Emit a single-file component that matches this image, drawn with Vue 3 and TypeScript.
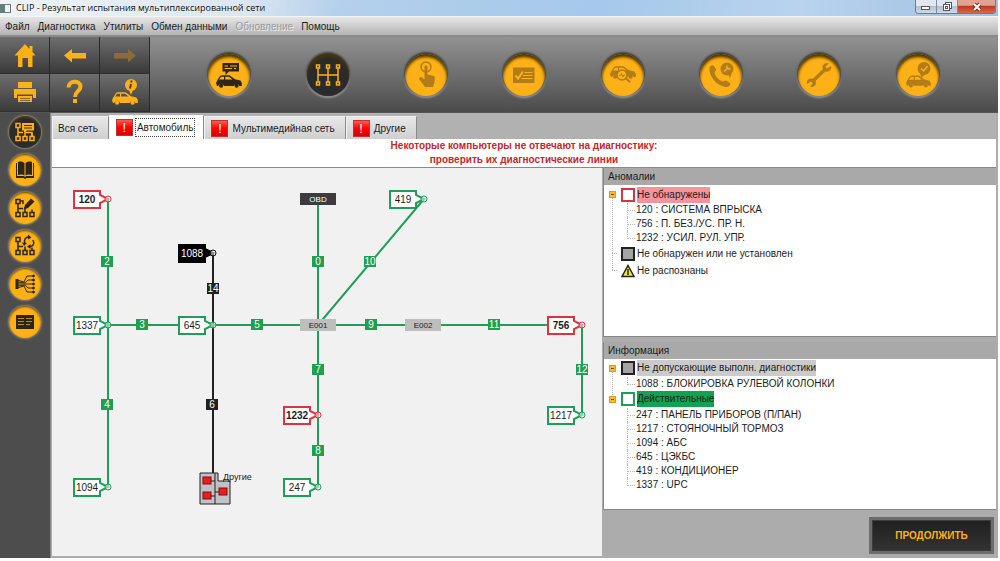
<script setup lang="ts">
import { ref } from 'vue'

type Tone = 'ok' | 'bad' | 'off'

interface Ecu { id: string; x: number; y: number; tone: Tone }
interface Tag { id: string; x: number; y: number; dark?: boolean }
interface Joint { id: string; x: number; y: number; dark?: boolean }
interface Group { label: string; mark: string; tint: string; open: boolean; items: string[] }

const menus = [
  { label: 'Файл' },
  { label: 'Диагностика' },
  { label: 'Утилиты' },
  { label: 'Обмен данными' },
  { label: 'Обновление', disabled: true },
  { label: 'Помощь' },
]

const navButtons = [
  { id: 'home', label: 'Главная' },
  { id: 'back', label: 'Назад' },
  { id: 'forward', label: 'Вперёд' },
  { id: 'print', label: 'Печать' },
  { id: 'help', label: 'Справка' },
  { id: 'carinfo', label: 'Данные автомобиля' },
]

const modes = [
  { id: 'vehicle', label: 'Автомобиль', state: 'ready' },
  { id: 'network', label: 'Сеть', state: 'current' },
  { id: 'touch', label: 'Выбор', state: 'idle' },
  { id: 'check', label: 'Проверки', state: 'idle' },
  { id: 'search', label: 'Поиск', state: 'idle' },
  { id: 'phone', label: 'Поддержка', state: 'idle' },
  { id: 'repair', label: 'Ремонт', state: 'idle' },
  { id: 'done', label: 'Завершение', state: 'idle' },
]

const tools = [
  { id: 'result', label: 'Результат' },
  { id: 'book', label: 'Документация' },
  { id: 'edit', label: 'Изменить' },
  { id: 'refresh', label: 'Повторить' },
  { id: 'wires', label: 'Проводка' },
  { id: 'list', label: 'Список' },
]
const activeTool = ref('result')

const tabs = [
  { label: 'Вся сеть', alert: false },
  { label: 'Автомобиль', alert: true },
  { label: 'Мультимедийная сеть', alert: true },
  { label: 'Другие', alert: true },
]
const activeTab = ref(1)

const ecus: Ecu[] = [
  { id: '120', x: 56, y: 31, tone: 'bad' },
  { id: '1337', x: 56, y: 157, tone: 'ok' },
  { id: '1094', x: 56, y: 319, tone: 'ok' },
  { id: '1088', x: 161, y: 85, tone: 'off' },
  { id: '645', x: 161, y: 157, tone: 'ok' },
  { id: '1232', x: 266, y: 247, tone: 'bad' },
  { id: '247', x: 266, y: 319, tone: 'ok' },
  { id: '419', x: 372, y: 31, tone: 'ok' },
  { id: '756', x: 530, y: 157, tone: 'bad' },
  { id: '1217', x: 530, y: 247, tone: 'ok' },
]

const links = [
  { d: 'M56 31V319' },
  { d: 'M56 157H530V247' },
  { d: 'M266 31V319' },
  { d: 'M266 157L372 31' },
  { d: 'M161 85V306', dark: true },
]

const tags: Tag[] = [
  { id: '2', x: 55, y: 94 },
  { id: '4', x: 55, y: 237 },
  { id: '3', x: 90, y: 157 },
  { id: '5', x: 205, y: 157 },
  { id: '14', x: 161, y: 121, dark: true },
  { id: '6', x: 160, y: 237, dark: true },
  { id: '0', x: 266, y: 94 },
  { id: '7', x: 266, y: 202 },
  { id: '8', x: 266, y: 283 },
  { id: '10', x: 318, y: 94 },
  { id: '9', x: 319, y: 157 },
  { id: '11', x: 442, y: 157 },
  { id: '12', x: 530, y: 202 },
]

const joints: Joint[] = [
  { id: 'OBD', x: 266, y: 31, dark: true },
  { id: 'E001', x: 266, y: 157 },
  { id: 'E002', x: 371, y: 157 },
]

const panels = ref<{ title: string; groups: Group[] }[]>([
  {
    title: 'Аномалии',
    groups: [
      {
        label: 'Не обнаружены', mark: 'red', tint: 'pink', open: true,
        items: ['120 : СИСТЕМА ВПРЫСКА', '756 : П. БЕЗ./УС. ПР. Н.', '1232 : УСИЛ. РУЛ. УПР.'],
      },
      { label: 'Не обнаружен или не установлен', mark: 'grey', tint: '', open: false, items: [] },
      { label: 'Не распознаны', mark: 'warn', tint: '', open: false, items: [] },
    ],
  },
  {
    title: 'Информация',
    groups: [
      {
        label: 'Не допускающие выполн. диагностики', mark: 'grey', tint: 'silver', open: true,
        items: ['1088 : БЛОКИРОВКА РУЛЕВОЙ КОЛОНКИ'],
      },
      {
        label: 'Действительные', mark: 'green', tint: 'green', open: true,
        items: [
          '247 : ПАНЕЛЬ ПРИБОРОВ (П/ПАН)', '1217 : СТОЯНОЧНЫЙ ТОРМОЗ', '1094 : АБС',
          '645 : ЦЭКБС', '419 : КОНДИЦИОНЕР', '1337 : UPC',
        ],
      },
    ],
  },
])
</script>

<template>
  <div class="window">
    <svg class="defs" aria-hidden="true">
      <symbol id="car" viewBox="0 0 26 13">
        <path fill-rule="evenodd" d="M1 11L0 8L1.500 5L4 1L6 .3H13.500L19 4.300L24.500 5.600L25.800 8V11H23.500A3 3 0 0 0 17.800 11H8A3 3 0 0 0 2.200 11ZM3.200 4.600H8V1.800H5ZM9.200 4.600H16.500L13 1.800H9.200Z" />
        <circle cx="5.100" cy="10.700" r="2.100" />
        <circle cx="20.600" cy="10.700" r="2.100" />
      </symbol>
    </svg>

    <header class="titlebar">
      <span class="app-icon"></span>
      <h1>CLIP - Результат испытания мультиплексированной сети</h1>
      <div class="win-buttons">
        <button type="button" aria-label="Свернуть">
          <svg width="12" height="10"><rect x="1.500" y="4.500" width="8" height="3" fill="#fff" stroke="#555" /></svg>
        </button>
        <button type="button" aria-label="Восстановить">
          <svg width="12" height="10"><g fill="#fff" stroke="#555"><rect x="4.500" y=".5" width="6" height="6" /><rect x="2.500" y="2.500" width="6" height="6" /><rect x="4.500" y="4.500" width="2" height="2" /></g></svg>
        </button>
        <button type="button" class="close" aria-label="Закрыть">
          <svg width="12" height="10"><path d="M3 2L9 8M9 2L3 8" stroke="#7a3028" stroke-width="4" /><path d="M3 2L9 8M9 2L3 8" stroke="#fff" stroke-width="2" /></svg>
        </button>
      </div>
    </header>

    <nav class="menubar">
      <button v-for="m in menus" :key="m.label" type="button" :disabled="m.disabled">{{ m.label }}</button>
    </nav>

    <div class="toolbar">
      <div class="nav-grid">
        <button v-for="b in navButtons" :key="b.id" type="button" :aria-label="b.label" :disabled="b.id === 'forward'">
          <svg width="50" height="37" viewBox="0 0 50 37">
            <path v-if="b.id === 'home'" d="M25 7L14.500 18.500H18V30H22.500V21H28V30H32.500V18.500H35.500L32.500 15V9H29.500V12Z" />
            <path v-else-if="b.id === 'back'" d="M14 18.500L22 12V16H36V21.500H22V25.500Z" />
            <path v-else-if="b.id === 'forward'" d="M36 18.500L28 12V16H14V21.500H28V25.500Z" />
            <g v-else-if="b.id === 'print'">
              <path d="M18 8H32V14H18ZM14 15H36V24H33V20.500H17V24H14ZM18 22H32V28H18Z" />
              <path d="M20 24.500H30M20 26.500H30" stroke="#8a6a20" stroke-width="1" />
            </g>
            <g v-else-if="b.id === 'help'">
              <path d="M18.500 13.500C18.500 6 30.500 6 30.500 12.500C30.500 17 25 17.500 25 23" fill="none" stroke="#fdb117" stroke-width="4" />
              <rect x="23" y="25" width="4" height="4" />
            </g>
            <g v-else>
              <circle cx="31" cy="11" r="6" />
              <path d="M29 16L31 21L33 16Z" />
              <path d="M31.500 6.500L31.300 8.500M31 10L30 14.500" stroke="#4a3a10" stroke-width="2" />
              <use href="#car" x="12" y="18" width="26" height="13" />
            </g>
          </svg>
        </button>
      </div>

      <div class="modes">
        <button v-for="m in modes" :key="m.id" type="button" class="round mode" :class="m.state" :aria-label="m.label">
          <svg width="42" height="42" viewBox="0 0 42 42">
            <g v-if="m.id === 'vehicle'">
              <path d="M14.500 9H31V17.500H21L17.500 21V17.500H14.500Z" />
              <path d="M16.500 12H20M22 12H29M16.500 14.500H24M26 14.500H28" stroke="#fdb117" />
              <use href="#car" x="8" y="21" width="26" height="13" />
            </g>
            <g v-else-if="m.id === 'network'" fill="none" stroke="#fdb117" stroke-width="1.500">
              <path d="M11 14V28M21 14V28M31 14V28M11 21H31" />
              <path d="M9.500 11H12.500V14H9.500ZM19.500 11H22.500V14H19.500ZM29.500 11H32.500V14H29.500ZM9.500 28H12.500V31H9.500ZM19.500 28H22.500V31H19.500ZM29.500 28H32.500V31H29.500Z" fill="#2b2b2b" />
            </g>
            <g v-else-if="m.id === 'touch'">
              <circle cx="21" cy="13" r="5" fill="none" stroke="currentColor" stroke-width="1.500" />
              <path d="M19.500 12.500C19.500 11 22.500 11 22.500 12.500V20.500L29 22C30 22.500 30 24 29.500 28L28 33H20L14 25C14 23 16 22.500 17 23.500L19.500 25.500Z" />
            </g>
            <g v-else-if="m.id === 'check'">
              <path d="M10 13.500H31.500V29H10Z" />
              <path d="M12.500 21.500L15 24.500L20 17.500" fill="none" stroke="#fdb117" stroke-width="2" />
              <path d="M21.500 18.500H29.500M20 21.500H29.500M18.500 24.500H29.500" stroke="#fdb117" />
            </g>
            <g v-else-if="m.id === 'search'">
              <use href="#car" x="8" y="12" width="26" height="13" />
              <circle cx="20" cy="21" r="5" fill="#fdb117" stroke="currentColor" stroke-width="1.500" />
              <path d="M17 21.500H18.500L19.500 19.500L21 23L22 21H23" fill="none" stroke="currentColor" />
              <path d="M24 24.500L28 28" stroke="currentColor" stroke-width="2" />
            </g>
            <g v-else-if="m.id === 'phone'">
              <path d="M9.500 14C10 11.500 12.500 10.500 14 12L16 15.500C16 17 14.500 17.500 14.500 18.500C15.500 22.500 18.500 26 22.500 27.500C24 27.500 24.500 26 26 26.500L30 29C31 30.500 29 33 26.500 33C17.500 32.500 9 23 9.500 14Z" />
              <circle cx="27" cy="15" r="6.500" />
              <path d="M28 20L30 24L32 18Z" />
              <path d="M24 17.500L28 14M27 11.500C26 13.500 28 15.500 30.500 14.500" fill="none" stroke="#fdb117" stroke-width="1.500" />
            </g>
            <g v-else-if="m.id === 'repair'">
              <path d="M14 28L28.500 14" stroke="currentColor" stroke-width="3.500" />
              <path d="M30.500 9.500C26 7.500 22.500 13 26 16.500C29.500 19.500 34.500 16 33 12L29 14.500L27.500 13Z" />
              <path d="M12 32.500C16.500 34.500 20 29 16.500 26C13 22.500 7.500 26 9 30L13 27.500L14.800 29.200Z" />
            </g>
            <g v-else>
              <circle cx="27" cy="14.500" r="6.500" />
              <path d="M23 19L24.500 24L28 20Z" />
              <path d="M24 14.500L26.500 17L30.500 12" fill="none" stroke="#fdb117" stroke-width="1.500" />
              <use href="#car" x="9" y="21" width="25" height="13" />
            </g>
          </svg>
        </button>
      </div>
    </div>

    <div class="workspace">
      <aside class="tools">
        <button
          v-for="t in tools" :key="t.id" type="button" class="round tool"
          :class="t.id === activeTool ? 'current' : 'ready'" :aria-label="t.label" @click="activeTool = t.id"
        >
          <svg width="32" height="32" viewBox="0 0 32 32">
            <g v-if="t.id === 'result' || t.id === 'edit' || t.id === 'refresh'" fill="none" stroke="currentColor" stroke-width="1.500">
              <path d="M7 7.500H11V11.500H7ZM7 20.500H11V24.500H7ZM14 20.500H18V24.500H14ZM21 20.500H25V24.500H21Z" />
              <path d="M9 11.500V20.500M9 16.500H14M16 20.500V16.500M23 20.500V17.500" />
              <g v-if="t.id === 'result'">
                <path d="M16 16.500H23V20" />
                <path d="M13 7H25V14.500H18L15 17V14.500H13Z" fill="currentColor" stroke="none" />
                <path d="M15 9.500H23M15 12H23" stroke="#2b2b2b" stroke-width="1" />
              </g>
              <g v-else-if="t.id === 'edit'">
                <path d="M11 9H14V12" />
                <path d="M14.500 17.500L16 13L22 6.500L25.500 9.500L19 16Z" fill="currentColor" stroke="none" />
              </g>
              <g v-else>
                <path d="M16 14C14 10 17 6.500 20 7M24 10C26 14 23.500 17 20.500 16.500" />
                <path d="M19 4.500L22.500 7.500L19 9.500ZM21.500 14L18 16.500L21.500 19ZM13 12.500L18 13L15 16Z" fill="currentColor" stroke="none" />
              </g>
            </g>
            <g v-else-if="t.id === 'book'">
              <path d="M7 9H8V22H15L16 23L17 22H24V9H25V24H17.500L16 25L14.500 24H7Z" />
              <path d="M9 8C12 7 14 8 15.500 9V21.500C14 20.500 12 20 9 21ZM16.500 9C18 8 20 7 23 8V21C20 20 18 20.500 16.500 21.500Z" />
            </g>
            <g v-else-if="t.id === 'wires'" fill="none" stroke="currentColor">
              <path d="M8 12L15 14L18 8H25M8 14L16 15L19 12H25M8 16H25M8 18L16 17L19 20H25M8 20L15 18L18 24H25" />
              <path d="M8 11V21" stroke-width="3" />
              <g fill="#5a2410"><circle cx="24.500" cy="8" r="1" /><circle cx="24.500" cy="12" r="1" /><circle cx="24.500" cy="16" r="1" /><circle cx="24.500" cy="20" r="1" /><circle cx="24.500" cy="24" r="1" /></g>
            </g>
            <g v-else>
              <path d="M7 9H25V23H7Z" />
              <path d="M9 12.500H15M17 12.500H23M9 15.500H15M17 15.500H23M9 18.500H15M17 18.500H21" stroke="#c08a1a" />
            </g>
          </svg>
        </button>
      </aside>

      <main class="main">
        <div class="tabs" role="tablist">
          <button
            v-for="(t, i) in tabs" :key="t.label" type="button" role="tab" class="tab"
            :class="{ active: i === activeTab, plain: !t.alert }" :aria-selected="i === activeTab" @click="activeTab = i"
          >
            <span v-if="t.alert" class="alert">!</span>
            <span class="tab-label">{{ t.label }}</span>
          </button>
        </div>

        <p class="message">Некоторые компьютеры не отвечают на диагностику:<br>проверить их диагностические линии</p>

        <div class="content">
          <section class="canvas">
            <svg class="diagram" viewBox="0 0 550 388" preserveAspectRatio="xMinYMin meet">
              <path v-for="l in links" :key="l.d" :d="l.d" class="link" :class="{ dark: l.dark }" />
              <g v-for="t in tags" :key="t.id" class="tag" :class="{ dark: t.dark }" :transform="`translate(${t.x} ${t.y})`">
                <rect x="-6" y="-6" width="12" height="11" />
                <text y="3">{{ t.id }}</text>
              </g>
              <g v-for="j in joints" :key="j.id" class="joint" :class="{ dark: j.dark }" :transform="`translate(${j.x} ${j.y})`">
                <rect x="-18" y="-6" width="36" height="12" />
                <text y="3">{{ j.id }}</text>
              </g>
              <g v-for="e in ecus" :key="e.id" class="ecu" :class="e.tone" :transform="`translate(${e.x} ${e.y})`">
                <path d="M-34 -8H-8V-4L0 0L-8 4V9H-34Z" />
                <circle r="3" />
                <text x="-21" y="4">{{ e.id }}</text>
              </g>
              <g transform="translate(148 305)">
                <path d="M0 0H18V8H30V31H0Z" fill="#c2c2c6" stroke="#222" />
                <path d="M15 0V31M10 8H15M10 23H15M15 19H20" stroke="#222" fill="none" />
                <g fill="#ee1c1c" stroke="#7a1010">
                  <rect x="3" y="4" width="8" height="7" /><rect x="3" y="19" width="8" height="7" /><rect x="19" y="15" width="8" height="7" />
                </g>
                <text x="23" y="7" class="others">Другие</text>
              </g>
            </svg>
          </section>

          <div class="side">
            <section v-for="p in panels" :key="p.title" class="panel">
              <h2>{{ p.title }}</h2>
              <ul class="tree">
                <li v-for="g in p.groups" :key="g.label" class="group">
                  <div class="group-row">
                    <button v-if="g.items.length" type="button" class="toggle" :aria-expanded="g.open" :aria-label="g.label" @click="g.open = !g.open"></button>
                    <span v-else class="stub"></span>
                    <svg v-if="g.mark === 'warn'" width="14" height="14" viewBox="0 0 14 14">
                      <path d="M7 1.500L13 12.500H1Z" fill="#f5e81c" stroke="#222" stroke-width="1.500" /><path d="M7 5V11" stroke="#222" stroke-width="1.500" />
                    </svg>
                    <span v-else class="mark" :class="g.mark"></span>
                    <span class="group-label" :class="g.tint">{{ g.label }}</span>
                  </div>
                  <ul v-if="g.open && g.items.length" class="leaves">
                    <li v-for="it in g.items" :key="it">{{ it }}</li>
                  </ul>
                </li>
              </ul>
            </section>
            <footer class="actions">
              <button type="button" class="continue">ПРОДОЛЖИТЬ</button>
            </footer>
          </div>
        </div>
      </main>
    </div>
  </div>
</template>

<style>
body {
  margin: 0;
  background: #fdfdfd;
}
</style>

<style scoped>
* {
  box-sizing: border-box;
}

.window {
  display: flex;
  flex-direction: column;
  min-height: 100vh;
  padding: 0 2px 3px 0;
  font-family: "Liberation Sans", Arial, sans-serif;
  font-size: 10px;
  color: #1c1c1c;
}

.defs {
  position: absolute;
  width: 0;
  height: 0;
}

button {
  margin: 0;
  padding: 0;
  border: 0;
  background: none;
  font: inherit;
  color: inherit;
}

button svg {
  display: block;
  fill: currentColor;
}

h1,
h2,
p,
ul {
  margin: 0;
  padding: 0;
  font: inherit;
  list-style: none;
}

.titlebar {
  display: flex;
  align-items: center;
  height: 16px;
  gap: 5px;
  background: linear-gradient(100deg, #eef3f8 0%, #dde7f1 24%, #b4d0ec 34%, #a5c8ec 60%, #b9d3ee 80%, #9fc0e2 100%);
}

.titlebar h1 {
  flex: 1;
  font-family: "Open Sans", "Noto Sans", sans-serif;
  font-size: 9px;
  line-height: 16px;
  color: #111;
}

.app-icon {
  width: 11px;
  height: 9px;
  border: 1px solid #777;
  background: linear-gradient(90deg, #4d8a80 50%, #f4f4f4 50%);
}

.win-buttons {
  display: flex;
  align-self: flex-start;
  height: 14px;
  margin-right: 2px;
  border: 1px solid #6d7b8a;
  border-top: 0;
  border-radius: 0 0 4px 4px;
  overflow: hidden;
}

.win-buttons button {
  display: grid;
  place-items: center;
  width: 21px;
  border-right: 1px solid #7d8b9a;
  background: linear-gradient(#dfe8f1 45%, #b3c2d2 50%, #cfdae6);
}

.win-buttons .close {
  width: 37px;
  border-right: 0;
  background: linear-gradient(#e2a292 40%, #bf3a22 50%, #d9674a);
}

.menubar {
  display: flex;
  align-items: center;
  gap: 8px;
  height: 21px;
  padding: 0 5px;
  border-top: 1px solid #f5f5f5;
  border-bottom: 2px solid #8a8a8a;
  background: linear-gradient(#e6e6e6, #b4b4b4);
}

.menubar button:disabled {
  color: #999;
  text-shadow: 1px 1px 0 #eee;
}

.toolbar {
  display: flex;
  height: 76px;
  background: linear-gradient(#929292, #4b4b4b);
  border-bottom: 1px solid #555;
}

.nav-grid {
  display: grid;
  grid-template-columns: repeat(3, 50px);
  grid-template-rows: 37px 38px;
}

.nav-grid button {
  border-right: 1px solid #2a2a2a;
  border-bottom: 1px solid #2e2e2e;
  background: linear-gradient(#6e6e6e, #3a3a3a);
  color: #fdb117;
  overflow: hidden;
}

.nav-grid button:disabled {
  color: #8b6c38;
}

.modes {
  display: flex;
  flex: 1;
  justify-content: space-around;
  align-items: center;
  padding: 0 31px 0 30px;
}

.round {
  border-radius: 50%;
  background: #fdb117;
  color: #2e2616;
}

.mode {
  width: 42px;
  height: 42px;
  box-shadow: inset 0 3px 3px #4a3300, 0 -1px 2px 1px #3a3a3a, 0 1px 2px 1px #a0a0a0;
}

.mode.idle {
  color: #b27c18;
}

.tool {
  width: 32px;
  height: 32px;
  box-shadow: inset 0 1px 2px #6b4a00, 0 0 2px 1px #8a8478;
}

.round.current {
  background: #2b2b2b;
  color: #fdb117;
}

.workspace {
  display: flex;
  flex: 1;
}

.tools {
  display: flex;
  flex-direction: column;
  align-items: center;
  gap: 6px;
  width: 50px;
  padding-top: 3px;
  background: #4d4d4d;
}

.main {
  display: flex;
  flex: 1;
  flex-direction: column;
  min-width: 0;
  padding: 0 2px 2px 1px;
  background: #acacac;
  border-left: 1px solid #8a8a8a;
}

.tabs {
  display: flex;
  align-items: flex-end;
  height: 26px;
  padding-top: 2px;
  background: #b1b1b1;
}

.tab {
  display: flex;
  align-items: center;
  gap: 2px;
  height: 23px;
  padding: 0 8px 0 6px;
  border: 1px solid #f2f2f2;
  border-right-color: #8a8a8a;
  border-bottom: 0;
  background: linear-gradient(#e8e8e8, #cfcfcf);
}

.tab.plain {
  padding: 0 8px 0 3px;
}

.tab.active {
  height: 24px;
  background: #fff;
}

.tab-label {
  padding: 2px 1px;
  border: 1px dotted transparent;
  line-height: 13px;
}

.tab.active .tab-label {
  border-color: #444;
}

.alert {
  width: 17px;
  height: 17px;
  border: 1px solid #b33;
  background: linear-gradient(#ff5a50, #f00 50%, #d80000);
  color: #fff;
  font-size: 13px;
  line-height: 15px;
  text-align: center;
}

.message {
  height: 28px;
  background: #fff;
  color: #c4262c;
  font-weight: bold;
  line-height: 14px;
  text-align: center;
}

.content {
  display: flex;
  flex: 1;
  border-top: 1px solid #8a8a8a;
}

.canvas {
  flex: 550;
  min-width: 0;
  background: #f1f1f1;
}

.diagram {
  display: block;
  width: 100%;
  height: auto;
}

.diagram text {
  text-anchor: middle;
  fill: #1c1c1c;
}

.link {
  fill: none;
  stroke: #1e9e58;
  stroke-width: 2;
}

.link.dark {
  stroke: #222;
}

.tag rect {
  fill: #1ea050;
}

.tag.dark rect {
  fill: #222;
}

.diagram .tag text {
  fill: #fff;
}

.joint rect {
  fill: #bebebe;
}

.joint.dark rect {
  fill: #3c3c3c;
}

.diagram .joint text {
  font-size: 8px;
}

.diagram .joint.dark text {
  fill: #fff;
}

.ecu path {
  fill: #fff;
  stroke: #1e9e58;
  stroke-width: 2;
}

.ecu circle {
  fill: #fff;
  fill-opacity: 0.5;
  stroke: #1e9e58;
}

.ecu.bad path,
.ecu.bad circle {
  stroke: #dc3340;
}

.ecu.bad text {
  font-weight: bold;
}

.ecu.off path {
  fill: #000;
  stroke: #000;
}

.ecu.off circle {
  stroke: #000;
}

.diagram .ecu.off text {
  fill: #fff;
}

.diagram .others {
  font-size: 9px;
  text-anchor: start;
}

.side {
  display: flex;
  flex: 393;
  flex-direction: column;
  min-width: 0;
  margin-left: 1px;
}

.panel {
  display: flex;
  flex: 1;
  flex-direction: column;
  margin-bottom: 5px;
  border-left: 1px solid #888;
  border-bottom: 1px solid #888;
  background: #fff;
}

.panel h2 {
  height: 17px;
  padding-left: 4px;
  background: #a9a9a9;
  line-height: 17px;
}

.tree {
  padding: 1px 0 0 5px;
}

.group {
  position: relative;
}

.group:not(:last-child)::before {
  content: "";
  position: absolute;
  top: 8px;
  bottom: -8px;
  left: 3px;
  border-left: 1px dotted #bbb;
}

.group-row {
  display: flex;
  align-items: center;
  height: 17px;
}

.toggle {
  position: relative;
  width: 7px;
  height: 7px;
  margin-right: 5px;
  border: 1px solid #e09a18;
  background: linear-gradient(#6b4a10, #6b4a10) center / 3px 1px no-repeat #fdb933;
}

.stub {
  width: 5px;
  margin: 0 4px 0 3px;
  border-top: 1px dotted #bbb;
}

.mark {
  width: 14px;
  height: 14px;
  border: 2px solid #222;
  background: #fff;
}

.mark.red {
  border-color: #dc3340;
}

.mark.green {
  border-color: #1e9e58;
}

.mark.grey {
  background: #a4a4a4;
}

.group-label {
  margin-left: 2px;
  line-height: 16px;
}

.group-label.pink {
  background: #f6929a;
}

.group-label.silver {
  background: #cbcbcb;
}

.group-label.green {
  background: #12a352;
}

.leaves {
  margin-left: 18px;
}

.leaves li {
  position: relative;
  padding-left: 9px;
  line-height: 14px;
}

.leaves li::before {
  content: "";
  position: absolute;
  top: 0;
  left: 0;
  width: 7px;
  height: 7px;
  border-left: 1px dotted #bbb;
  border-bottom: 1px dotted #bbb;
}

.leaves li:not(:last-child)::after {
  content: "";
  position: absolute;
  top: 7px;
  bottom: 0;
  left: 0;
  border-left: 1px dotted #bbb;
}

.actions {
  display: flex;
  justify-content: flex-end;
  align-items: center;
  height: 41px;
  padding-right: 2px;
}

.continue {
  width: 125px;
  height: 37px;
  border: 3px solid #6c6c6c;
  outline: 1px solid #3c3c3c;
  outline-offset: -4px;
  background: linear-gradient(#1f1f1f, #333);
  color: #fdb117;
  font-weight: bold;
}
</style>
